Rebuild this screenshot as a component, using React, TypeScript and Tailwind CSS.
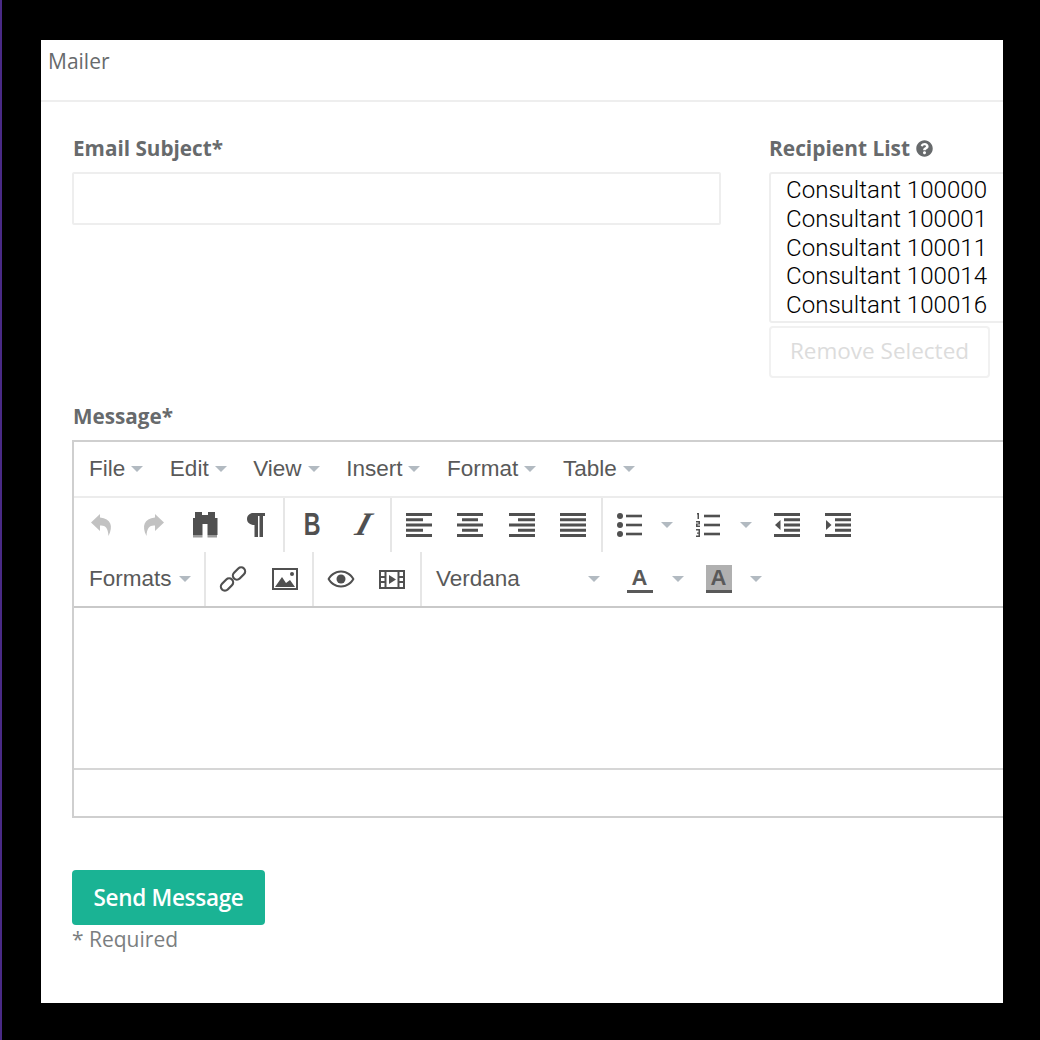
import type { ReactNode } from 'react';
import { FaQuestionCircle } from 'react-icons/fa';

const recipients = ['100000', '100001', '100011', '100014', '100016'];
const menus = ['File', 'Edit', 'View', 'Insert', 'Format', 'Table'];

function Caret({ className = '' }: { className?: string }) {
  return <span className={`inline-block h-0 w-0 border-x-[6px] border-t-[6px] border-x-transparent border-t-[#b2bac1] ${className}`} />;
}

function Btn({ children, className = 'w-[51.5px]' }: { children: ReactNode; className?: string }) {
  return <div className={`flex h-full shrink-0 items-center justify-center ${className}`}>{children}</div>;
}

function Icon({ children, color = '#505050' }: { children: ReactNode; color?: string }) {
  return (
    <svg width="28" height="28" viewBox="0 0 28 28" fill={color}>
      {children}
    </svg>
  );
}

// text alignment icons are five bars, long and short in turn
function Lines({ bars, children }: { bars: [number, number][]; children?: ReactNode }) {
  return (
    <Icon>
      {bars.map(([x, w], i) => (
        <rect key={i} x={x} y={2 + i * 5.25} width={w} height="3" />
      ))}
      {children}
    </Icon>
  );
}

const Undo = ({ flip = false }: { flip?: boolean }) => (
  <Icon color="#c2c2c2">
    <path transform={flip ? 'matrix(-1 0 0 1 28 0)' : undefined} d="M12 3 3 11.500l9 8.500v-5.500c5-.5 8 2 8.500 10.500 5-10 2.500-17.500-8.500-18.500z" />
  </Icon>
);

export default function App() {
  return (
    <div className="h-[1040px] w-[1040px] border-l-2 border-[#4a2a86] bg-black pl-[39px] pt-[40px] font-['Open_Sans',sans-serif] text-[#676a6c]">
      <div className="h-[963px] w-[962px] overflow-hidden bg-white">
        <div className="h-[62px] border-b-2 border-[#eeeeee] pl-[7px] pt-[6px] text-[21px] leading-[30px]">Mailer</div>

        <div className="pl-[31px] pt-[32px]">
          <div className="flex">
            <div className="w-[649px] shrink-0">
              <div className="mb-[10px] pl-[1px] text-[20.700px] font-bold leading-[28px]">Email Subject*</div>
              <div className="h-[53px] rounded-[2px] border-2 border-[#eeeeee]" />
            </div>
            <div className="ml-[48px] w-[260px] shrink-0">
              <div className="mb-[10px] flex items-center gap-[6px] text-[20.900px] font-bold leading-[28px]">
                Recipient List <FaQuestionCircle className="h-[17px] w-[17px]" />
              </div>
              <div className="h-[151px] w-[260px] rounded-[3px] border-2 border-[#eeeeee] pl-[15px] pt-[2px] font-['Roboto',sans-serif] text-[24.100px] font-light leading-[28.800px] text-black">
                {recipients.map((r) => (
                  <div key={r}>Consultant {r}</div>
                ))}
              </div>
              <div className="mt-[3px] flex h-[52px] w-[221px] items-center justify-center rounded-[4px] border-2 border-[#f1f1f1] pb-[3px] text-[22.500px] text-[#dcdcdc]">
                Remove Selected
              </div>
            </div>
          </div>

          <div className="mt-[24px] mb-[10px] pl-[1px] text-[20.700px] font-bold leading-[28px]">Message*</div>

          <div className="h-[378px] w-[1000px] border-2 border-[#cfcfcf] font-['Liberation_Sans',sans-serif] text-[22.500px] text-[#595959]">
            <div className="flex h-[56px] items-center gap-[26.600px] border-b-2 border-[#ececec] pl-[15px]">
              {menus.map((m) => (
                <div key={m} className="flex items-center gap-[6px]">
                  {m} <Caret />
                </div>
              ))}
            </div>

            <div className="flex h-[54px] pl-[2px]">
              <div className="flex border-r-2 border-[#e6e6e6] pr-[1px]">
                <Btn><Undo /></Btn>
                <Btn><Undo flip /></Btn>
                <Btn>
                  <Icon>
                    <path d="M4 1h7v3h6V1h7v6h2.500v17H16.500V13h-5v11H2V7h2z" />
                    <rect x="2" y="24" width="9.500" height="2.500" fill="#9a9a9a" />
                    <rect x="16.500" y="24" width="9.500" height="2.500" fill="#9a9a9a" />
                  </Icon>
                </Btn>
                <Btn>
                  <Icon>
                    <path d="M11 2h12v3h-2v21h-3.500V5H16v21h-3.500V14C8 14 5 11.500 5 8s3-6 6-6z" />
                  </Icon>
                </Btn>
              </div>
              <div className="flex border-r-2 border-[#e6e6e6] pl-[1px] pr-[1px]">
                <Btn><span className="scale-x-75 text-[31px] font-bold text-[#505050]">B</span></Btn>
                <Btn><span className="-skew-x-[18deg] font-['Liberation_Serif',serif] text-[33px] font-bold italic text-[#505050]">I</span></Btn>
              </div>
              <div className="flex border-r-2 border-[#e6e6e6] pl-[1px] pr-[2px]">
                <Btn><Lines bars={[[1, 26], [1, 17], [1, 26], [1, 17], [1, 26]]} /></Btn>
                <Btn><Lines bars={[[1, 26], [6, 16], [1, 26], [6, 16], [1, 26]]} /></Btn>
                <Btn><Lines bars={[[1, 26], [10, 17], [1, 26], [10, 17], [1, 26]]} /></Btn>
                <Btn><Lines bars={[[1, 26], [1, 26], [1, 26], [1, 26], [1, 26]]} /></Btn>
              </div>
              <div className="flex pl-[1px]">
                <Btn>
                  <Icon>
                    <circle cx="4" cy="5" r="3" />
                    <circle cx="4" cy="14" r="3" />
                    <circle cx="4" cy="23" r="3" />
                    <rect x="10" y="3.700" width="16" height="2.600" />
                    <rect x="10" y="12.700" width="16" height="2.600" />
                    <rect x="10" y="21.700" width="16" height="2.600" />
                  </Icon>
                </Btn>
                <Btn className="w-[27px]"><Caret className="mr-[4px]" /></Btn>
                <Btn>
                  <Icon>
                    <path d="M3 2h2v6H3.500V3.500H3zM2 10h4v3.500H3.500v1H6V16H2v-3.500h2.500v-1H2zM2 18h4v8H2v-1.500h2.500v-1.800H3v-1.200h1.500v-2H2z" />
                    <rect x="10" y="3.700" width="16" height="2.600" />
                    <rect x="10" y="12.700" width="16" height="2.600" />
                    <rect x="10" y="21.700" width="16" height="2.600" />
                  </Icon>
                </Btn>
                <Btn className="w-[27px]"><Caret className="mr-[3px]" /></Btn>
                <Btn>
                  <Lines bars={[[1, 26], [11, 16], [11, 16], [11, 16], [1, 26]]}>
                    <path d="M7.500 9v10L2 14z" />
                  </Lines>
                </Btn>
                <Btn>
                  <Lines bars={[[1, 26], [11, 16], [11, 16], [11, 16], [1, 26]]}>
                    <path d="M2 9v10l5.500-5z" />
                  </Lines>
                </Btn>
              </div>
            </div>

            <div className="flex h-[56px] border-b-2 border-[#c9c9c9] pl-[1px]">
              <div className="flex w-[131px] items-center gap-[7px] border-r-2 border-[#e6e6e6] pl-[14px]">
                Formats <Caret />
              </div>
              <div className="flex w-[108px] border-r-2 border-[#e6e6e6] pl-[1px]">
                <Btn>
                  <Icon>
                    <g fill="none" stroke="#505050" strokeWidth="2.200">
                      <rect x="1" y="15.500" width="14" height="8" rx="4" transform="rotate(-45 8 19.500)" />
                      <rect x="13" y="4.500" width="14" height="8" rx="4" transform="rotate(-45 20 8.500)" />
                    </g>
                  </Icon>
                </Btn>
                <Btn className="w-[51.500px] pl-[2px]">
                  <Icon>
                    <path fillRule="evenodd" d="M1 3h26v22H1zm2 2v18h22V5z" />
                    <path d="M4 22l7-10 4 6 4-3 5 7z" />
                    <circle cx="21" cy="9" r="2" />
                  </Icon>
                </Btn>
              </div>
              <div className="flex w-[108px] border-r-2 border-[#e6e6e6] pl-[1px]">
                <Btn>
                  <Icon>
                    <path fillRule="evenodd" d="M14 5.500C7 5.500 2.500 10 0.500 14c2 4 6.500 8.500 13.500 8.500S25.500 18 27.500 14C25.500 10 21 5.500 14 5.500zM2.800 14C5 10.500 9 7.500 14 7.500s9 3 11.200 6.500C23 17.500 19 20.500 14 20.500S5 17.500 2.800 14z" />
                    <circle cx="14" cy="14" r="4.500" />
                  </Icon>
                </Btn>
                <Btn>
                  <Icon>
                    <path fillRule="evenodd" d="M1 5h26v19H1zm2 2v15h3.500V7zm5.500 0v15h11V7zm13 0v15H25V7z" />
                    <rect x="3" y="11" width="4" height="2" />
                    <rect x="3" y="16" width="4" height="2" />
                    <rect x="21" y="11" width="4" height="2" />
                    <rect x="21" y="16" width="4" height="2" />
                    <path d="M11 10l7 4.500-7 4.500z" />
                  </Icon>
                </Btn>
              </div>
              <div className="flex items-center">
                <div className="flex w-[183px] items-center justify-between pl-[14px] pr-[5.500px]">
                  Verdana <Caret />
                </div>
                <span className="ml-[21.500px] inline-flex h-[28px] w-[26px] items-start justify-center border-b-[3px] border-[#595959] text-[22px] font-bold leading-[25px]">A</span>
                <Caret className="ml-[19px]" />
                <span className="ml-[22px] inline-flex h-[28px] w-[26px] items-start justify-center border-b-[3px] border-[#595959] bg-[#b0b0b0] text-[22px] font-bold leading-[25px]">A</span>
                <Caret className="ml-[18px]" />
              </div>
            </div>

            <div className="h-[162px] border-b-2 border-[#d6d6d6]" />
          </div>

          <button className="mt-[52px] flex h-[55px] w-[193px] items-center justify-center rounded-[4px] bg-[#1ab394] font-['Open_Sans',sans-serif] text-[22.500px] font-semibold tracking-[-0.3px] text-white">
            Send Message
          </button>
          <div className="text-[21px] leading-[28px] text-[#7b7e80]">* Required</div>
        </div>
      </div>
    </div>
  );
}
